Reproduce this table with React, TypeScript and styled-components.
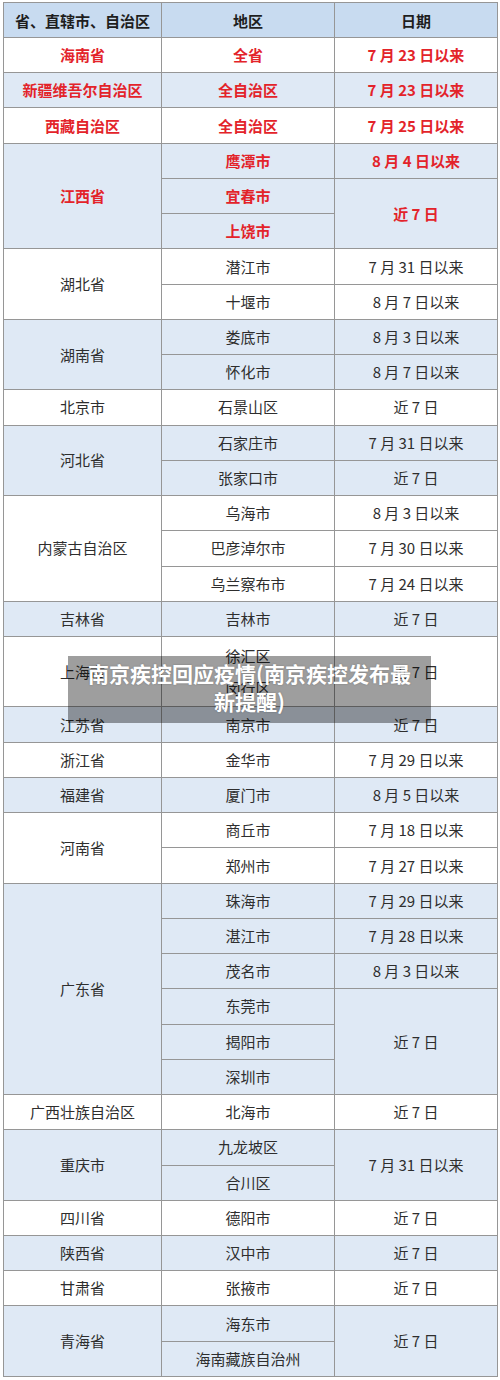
import React from "react";
import styled, { createGlobalStyle } from "styled-components";

const GlobalStyle = createGlobalStyle`
  html, body {
    margin: 0;
    padding: 0;
    background: #fff;
  }
  body {
    font-family: "Noto Sans CJK SC", "Noto Sans", sans-serif;
  }
`;

const Page = styled.div`
  position: relative;
  width: 500px;
  height: 1380px;
  padding: 2px 0 0 3px;
  box-sizing: border-box;
`;

const Table = styled.table`
  width: 494px;
  border-collapse: collapse;
  table-layout: fixed;
  border: 1px solid #969696;
`;

const HeadRow = styled.tr`
  height: 35px;
  background: #c8dbf0;
`;

const Row = styled.tr<{ $blue: boolean }>`
  height: 35.24px;
  background: ${(p) => (p.$blue ? "#dfe9f5" : "#ffffff")};
`;

const Th = styled.th`
  padding: 0;
  font-size: 15px;
  font-weight: 700;
  color: #1e1e1e;
  text-align: center;
  border: 1px solid #969696;
`;

const Td = styled.td<{ $red: boolean }>`
  padding: 0;
  font-size: 15px;
  font-weight: ${(p) => (p.$red ? 700 : 400)};
  color: ${(p) => (p.$red ? "#e3232a" : "#2e2e2e")};
  text-align: center;
  vertical-align: middle;
  border: 1px solid #969696;
  line-height: 20px;
`;

const Stacked = styled.div`
  display: flex;
  flex-direction: column;
  gap: 12px;
  align-items: center;
`;

const Caption = styled.div`
  position: absolute;
  left: 68px;
  top: 656px;
  width: 363px;
  height: 67px;
  background: rgba(0, 0, 0, 0.38);
  color: #fff;
  font-size: 21px;
  font-weight: 700;
  line-height: 28px;
  text-align: center;
  padding: 3px 14px 0;
  box-sizing: border-box;
  text-shadow: 0 0 2px rgba(0, 0, 0, 0.25);
`;

type Item = { area: string[]; date: string | null };
type Group = { prov: string; red?: boolean; items: Item[] };

const it = (area: string | string[], date: string | null): Item => ({
  area: Array.isArray(area) ? area : [area],
  date,
});

const groups: Group[] = [
  { prov: "海南省", red: true, items: [it("全省", "7 月 23 日以来")] },
  { prov: "新疆维吾尔自治区", red: true, items: [it("全自治区", "7 月 23 日以来")] },
  { prov: "西藏自治区", red: true, items: [it("全自治区", "7 月 25 日以来")] },
  {
    prov: "江西省",
    red: true,
    items: [it("鹰潭市", "8 月 4 日以来"), it("宜春市", "近 7 日"), it("上饶市", null)],
  },
  { prov: "湖北省", items: [it("潜江市", "7 月 31 日以来"), it("十堰市", "8 月 7 日以来")] },
  { prov: "湖南省", items: [it("娄底市", "8 月 3 日以来"), it("怀化市", "8 月 7 日以来")] },
  { prov: "北京市", items: [it("石景山区", "近 7 日")] },
  { prov: "河北省", items: [it("石家庄市", "7 月 31 日以来"), it("张家口市", "近 7 日")] },
  {
    prov: "内蒙古自治区",
    items: [
      it("乌海市", "8 月 3 日以来"),
      it("巴彦淖尔市", "7 月 30 日以来"),
      it("乌兰察布市", "7 月 24 日以来"),
    ],
  },
  { prov: "吉林省", items: [it("吉林市", "近 7 日")] },
  { prov: "上海市", items: [it(["徐汇区", "闵行区"], "近 7 日")] },
  { prov: "江苏省", items: [it("南京市", "近 7 日")] },
  { prov: "浙江省", items: [it("金华市", "7 月 29 日以来")] },
  { prov: "福建省", items: [it("厦门市", "8 月 5 日以来")] },
  { prov: "河南省", items: [it("商丘市", "7 月 18 日以来"), it("郑州市", "7 月 27 日以来")] },
  {
    prov: "广东省",
    items: [
      it("珠海市", "7 月 29 日以来"),
      it("湛江市", "7 月 28 日以来"),
      it("茂名市", "8 月 3 日以来"),
      it("东莞市", "近 7 日"),
      it("揭阳市", null),
      it("深圳市", null),
    ],
  },
  { prov: "广西壮族自治区", items: [it("北海市", "近 7 日")] },
  { prov: "重庆市", items: [it("九龙坡区", "7 月 31 日以来"), it("合川区", null)] },
  { prov: "四川省", items: [it("德阳市", "近 7 日")] },
  { prov: "陕西省", items: [it("汉中市", "近 7 日")] },
  { prov: "甘肃省", items: [it("张掖市", "近 7 日")] },
  { prov: "青海省", items: [it("海东市", "近 7 日"), it("海南藏族自治州", null)] },
];

// rows one item takes (stacked areas count double)
const rowsOf = (item: Item) => item.area.length;

const dateSpan = (items: Item[], i: number) => {
  let n = rowsOf(items[i]);
  for (let j = i + 1; j < items.length && items[j].date === null; j++) n += rowsOf(items[j]);
  return n;
};

const GroupRows = ({ group, blue }: { group: Group; blue: boolean }) => {
  const red = !!group.red;
  const total = group.items.reduce((s, x) => s + rowsOf(x), 0);
  const rows: React.ReactNode[] = [];
  group.items.forEach((item, i) => {
    const span = rowsOf(item);
    rows.push(
      <Row key={i} $blue={blue}>
        {i === 0 && (
          <Td $red={red} rowSpan={total}>
            {group.prov}
          </Td>
        )}
        <Td $red={red} rowSpan={span}>
          {span > 1 ? (
            <Stacked>
              {item.area.map((a) => (
                <span key={a}>{a}</span>
              ))}
            </Stacked>
          ) : (
            item.area[0]
          )}
        </Td>
        {item.date !== null && (
          <Td $red={red} rowSpan={dateSpan(group.items, i)}>
            {item.date}
          </Td>
        )}
      </Row>
    );
    for (let k = 1; k < span; k++) rows.push(<Row key={`${i}-${k}`} $blue={blue} />);
  });
  return <>{rows}</>;
};

export default function App() {
  return (
    <Page>
      <GlobalStyle />
      <Table>
        <colgroup>
          <col style={{ width: 158 }} />
          <col style={{ width: 173 }} />
          <col style={{ width: 163 }} />
        </colgroup>
        <thead>
          <HeadRow>
            <Th>省、直辖市、自治区</Th>
            <Th>地区</Th>
            <Th>日期</Th>
          </HeadRow>
        </thead>
        <tbody>
          {groups.map((g, i) => (
            <GroupRows key={g.prov} group={g} blue={i % 2 === 1} />
          ))}
        </tbody>
      </Table>
      <Caption>南京疾控回应疫情(南京疾控发布最新提醒)</Caption>
    </Page>
  );
}
